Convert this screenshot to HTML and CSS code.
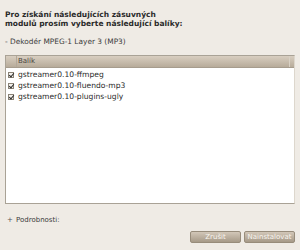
FILE: index.html
```html
<!DOCTYPE html>
<html lang="cs">
<head>
  <meta charset="UTF-8">
  <title>Instalace zásuvných modulů</title>
  <link rel="stylesheet" href="styles.css">
</head>
<body>
  <main class="dialog">
    <h1 class="prompt">Pro získání následujících zásuvných<br>modulů prosím vyberte následující balíky:</h1>
    <p class="plugin">- Dekodér MPEG-1 Layer 3 (MP3)</p>

    <div class="package-list">
      <div class="list-header">
        <span class="col-check"></span>
        <span class="col-name">Balík</span>
        <span class="col-end"></span>
      </div>
      <ul class="packages">
        <li><span class="check"></span>gstreamer0.10-ffmpeg</li>
        <li><span class="check"></span>gstreamer0.10-fluendo-mp3</li>
        <li><span class="check"></span>gstreamer0.10-plugins-ugly</li>
      </ul>
    </div>

    <div class="details">
      <span class="expander">+</span>
      <span>Podrobnosti:</span>
    </div>

    <div class="actions">
      <button type="button">Zrušit</button>
      <button type="button">Nainstalovat</button>
    </div>
  </main>
</body>
</html>
```

FILE: styles.css
```css
* {
  margin: 0;
  padding: 0;
  box-sizing: border-box;
}

:root {
  --color-bg: #efebe5;
  --color-text: #2a2a2a;
  --color-muted: #3c3c3c;
  --color-border: #a9a296;
}

body {
  width: 300px;
  height: 250px;
  overflow: hidden;
  background-color: var(--color-bg);
  font-family: "DejaVu Sans", sans-serif;
  color: var(--color-text);
}

.dialog {
  display: flex;
  flex-direction: column;
  height: 250px;
  padding: 10px 5px 7px;
}

.prompt {
  font-size: 7.5px;
  font-weight: 700;
  line-height: 9px;
  white-space: nowrap;
}

.plugin {
  margin-top: 9px;
  font-size: 7.4px;
  line-height: 10px;
  color: var(--color-muted);
}

.package-list {
  margin-top: 8px;
  height: 149px;
  background-color: #fff;
  border: 1px solid var(--color-border);
  border-right-color: #ddd7cd;
  display: flex;
  flex-direction: column;
}

.list-header {
  display: flex;
  height: 12px;
  background: linear-gradient(#d8cec0, #b7ab9a);
  border-bottom: 1px solid #a69c8d;
  font-size: 7px;
  line-height: 11px;
  color: #4a453e;
}

.col-check {
  width: 11px;
  border-right: 1px solid #b3a898;
}

.col-name {
  flex: 1;
  padding-left: 1px;
}

.col-end {
  width: 5px;
  border-left: 1px solid #d8d0c4;
}

.packages {
  list-style: none;
  padding-top: 1px;
}

.packages li {
  display: flex;
  align-items: center;
  height: 11px;
  font-size: 7.6px;
  padding-left: 2px;
}

.check {
  width: 6px;
  height: 6px;
  margin-right: 4px;
  border: 1px solid #8a8377;
  background-color: #f4f1ec;
  position: relative;
}

.check::after {
  content: "";
  position: absolute;
  left: 1px;
  top: -1px;
  width: 2px;
  height: 4px;
  border-right: 1.2px solid #2d2d2d;
  border-bottom: 1.2px solid #2d2d2d;
  transform: rotate(40deg);
}

.details {
  margin-top: 12px;
  display: flex;
  align-items: center;
  gap: 3px;
  font-size: 7px;
  color: var(--color-muted);
  padding-left: 2px;
}

.expander {
  width: 6px;
  height: 6px;
  font-size: 7px;
  line-height: 6px;
  text-align: center;
  color: #555;
}

.actions {
  margin-top: auto;
  display: flex;
  justify-content: flex-end;
  gap: 3px;
}

.actions button {
  width: 51px;
  height: 12px;
  font-family: inherit;
  font-size: 7px;
  color: #f8f5ef;
  background: linear-gradient(#d2c7b8, #a69a88);
  border: 1px solid #978c7b;
  border-radius: 2px;
}
```
